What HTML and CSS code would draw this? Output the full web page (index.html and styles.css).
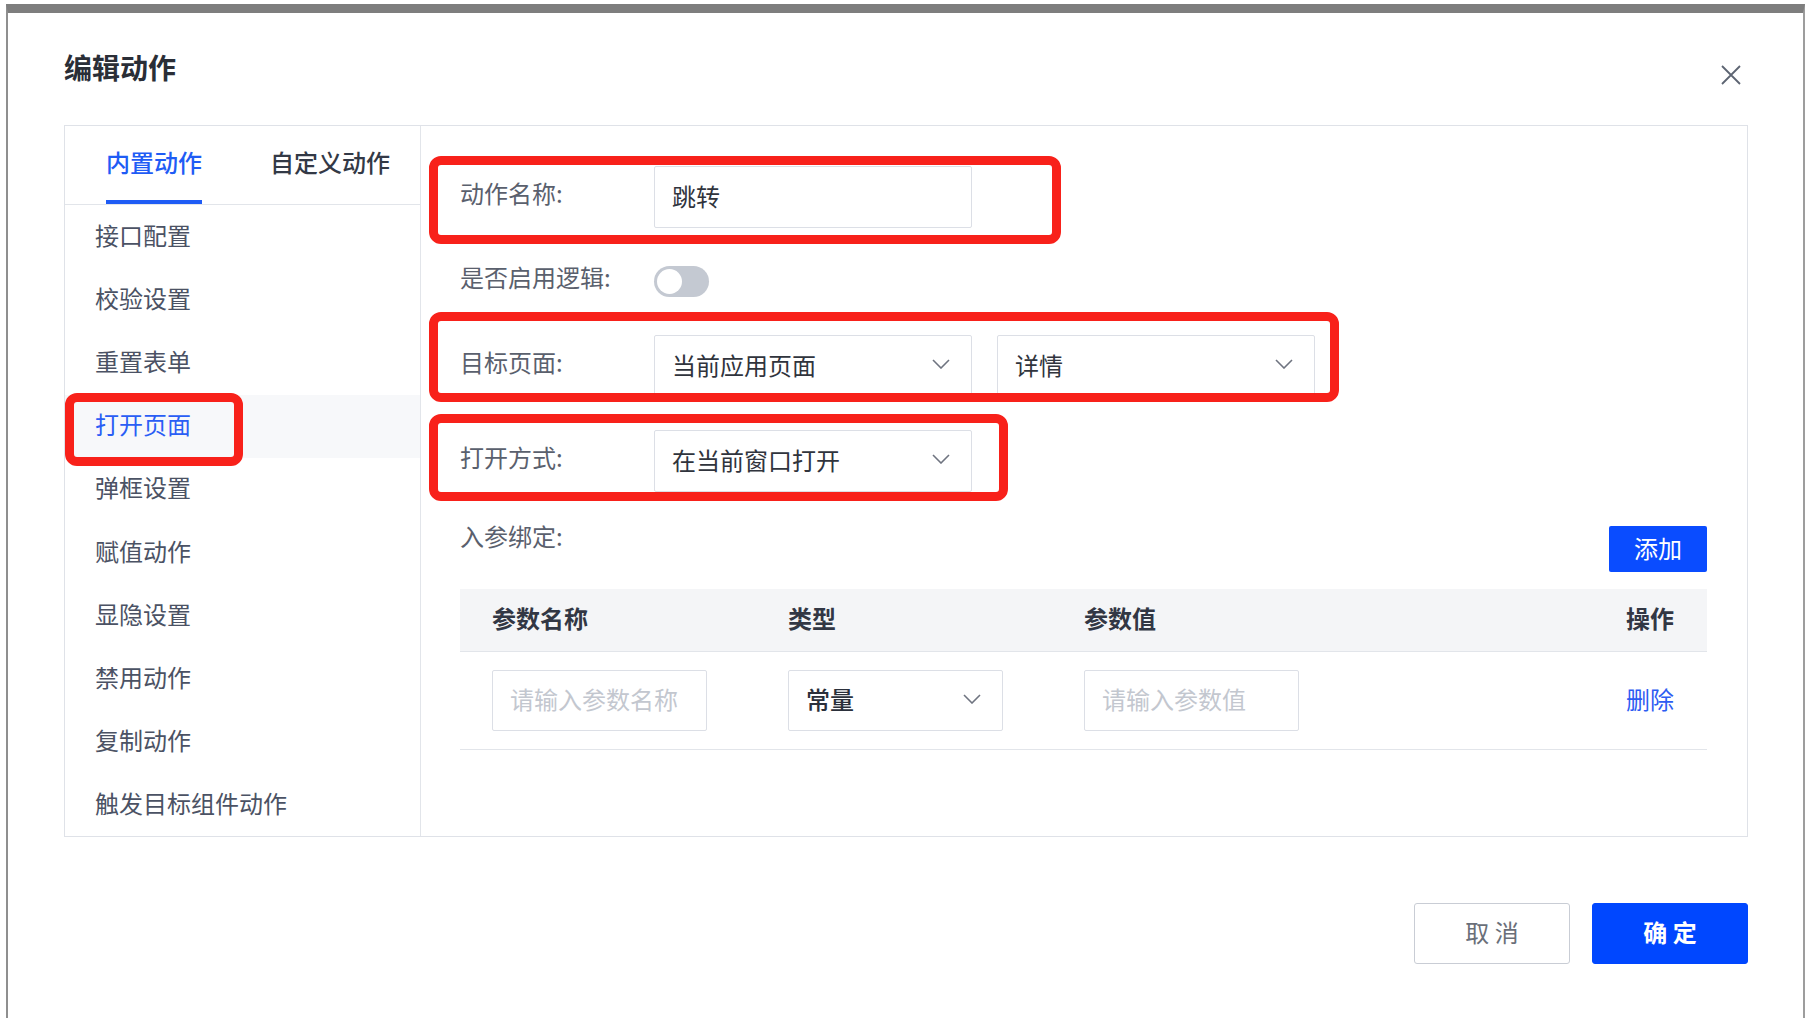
FILE: index.html
```html
<html>
    <head>
        <meta charset="utf-8">
        <link rel="stylesheet" href="styles.css">
    </head>
    <body>
        <div class="shot">
            <div class="dialogHead">
                <h2 class="dialogTitle">编辑动作</h2>
                <svg class="closeIcon" width="22" height="22" viewBox="0 0 22 22">
                    <path d="M2 2 L20 20 M20 2 L2 20" stroke="#5d6472" stroke-width="1.8" fill="none"/>
                </svg>
            </div>

            <div class="panel">
                <div class="side">
                    <div class="tabs">
                        <div class="tab active">内置动作</div>
                        <div class="tab">自定义动作</div>
                    </div>
                    <ul class="menu">
                        <li>接口配置</li>
                        <li>校验设置</li>
                        <li>重置表单</li>
                        <li class="active">打开页面</li>
                        <li>弹框设置</li>
                        <li>赋值动作</li>
                        <li>显隐设置</li>
                        <li>禁用动作</li>
                        <li>复制动作</li>
                        <li>触发目标组件动作</li>
                    </ul>
                </div>

                <div class="main">
                    <div class="formRow rowName">
                        <label class="formLabel">动作名称:</label>
                        <div class="field">跳转</div>
                    </div>
                    <div class="formRow rowLogic">
                        <label class="formLabel">是否启用逻辑:</label>
                        <span class="switch"><span class="knob"></span></span>
                    </div>
                    <div class="formRow rowTarget">
                        <label class="formLabel">目标页面:</label>
                        <div class="field select">
                            <span>当前应用页面</span>
                            <svg width="18" height="10" viewBox="0 0 18 10"><path d="M1 1 L9 9 L17 1" stroke="#6f7480" stroke-width="1.6" fill="none"/></svg>
                        </div>
                        <div class="field select second">
                            <span>详情</span>
                            <svg width="18" height="10" viewBox="0 0 18 10"><path d="M1 1 L9 9 L17 1" stroke="#6f7480" stroke-width="1.6" fill="none"/></svg>
                        </div>
                    </div>
                    <div class="formRow rowOpen">
                        <label class="formLabel">打开方式:</label>
                        <div class="field select">
                            <span>在当前窗口打开</span>
                            <svg width="18" height="10" viewBox="0 0 18 10"><path d="M1 1 L9 9 L17 1" stroke="#6f7480" stroke-width="1.6" fill="none"/></svg>
                        </div>
                    </div>

                    <div class="paramsHead">
                        <span class="formLabel">入参绑定:</span>
                        <button class="addButton">添加</button>
                    </div>

                    <div class="paramTable">
                        <div class="tHead">
                            <div class="c1">参数名称</div>
                            <div class="c2">类型</div>
                            <div class="c3">参数值</div>
                            <div class="c4">操作</div>
                        </div>
                        <div class="tRow">
                            <div class="c1"><div class="field small placeholder">请输入参数名称</div></div>
                            <div class="c2">
                                <div class="field small select strong">
                                    <span>常量</span>
                                    <svg width="18" height="10" viewBox="0 0 18 10"><path d="M1 1 L9 9 L17 1" stroke="#6f7480" stroke-width="1.6" fill="none"/></svg>
                                </div>
                            </div>
                            <div class="c3"><div class="field small placeholder">请输入参数值</div></div>
                            <div class="c4"><a class="link">删除</a></div>
                        </div>
                    </div>
                </div>
            </div>

            <div class="footer">
                <button class="btn">取 消</button>
                <button class="btn primary">确 定</button>
            </div>

            <!-- red annotation boxes -->
            <div class="mark markName"></div>
            <div class="mark markTarget"></div>
            <div class="mark markOpen"></div>
            <div class="mark markMenu"></div>
        </div>
    </body>
</html>
```

FILE: styles.css
```css
body {
    margin: 0;
    background: #fff;
    font-family: "Noto Sans CJK SC", "Noto Sans", sans-serif;
    overflow: hidden;
}
.shot {
    position: relative;
    margin: 4px 0 0 6px;
    width: 1799px;
    height: 1014px;
    box-sizing: border-box;
    border-top: 9px solid #7e7e7e;
    border-left: 2px solid #8f8f8f;
    border-right: 2px solid #9d9d9d;
    background: #fff;
}

/* header */
.dialogHead {
    height: 112px;
    padding: 0 61px 0 56px;
    display: flex;
    justify-content: space-between;
    align-items: center;
}
.dialogTitle {
    margin: 0 0 4px;
    font-size: 28px;
    font-weight: 700;
    color: #2a2e37;
}
.closeIcon {
    margin-top: 12px;
}

/* panel */
.panel {
    margin: 0 55px 0 56px;
    height: 712px;
    box-sizing: border-box;
    border: 1px solid #dfe2e8;
    display: flex;
}
.side {
    width: 356px;
    flex-shrink: 0;
    box-sizing: border-box;
    border-right: 1px solid #e2e5ea;
}
.tabs {
    height: 79px;
    box-sizing: border-box;
    border-bottom: 1px solid #e2e5ea;
    padding-left: 41px;
    display: flex;
    align-items: flex-end;
}
.tab {
    font-size: 24px;
    line-height: 32px;
    font-weight: 500;
    color: #333946;
    padding-bottom: 22px;
    border-bottom: 4px solid transparent;
}
.tab + .tab {
    margin-left: 68px;
}
.tab.active {
    color: #1f5cf5;
    border-bottom-color: #1f5cf5;
}
.menu {
    list-style: none;
    margin: 0;
    padding: 0;
}
.menu > li {
    height: 63.2px;
    box-sizing: border-box;
    padding: 0 0 5px 30px;
    display: flex;
    align-items: center;
    font-size: 24px;
    color: #4b5264;
}
.menu > li.active {
    background: #f7f8fa;
    color: #2a5ef5;
}

/* form */
.main {
    flex: 1;
    padding: 40px 40px 0 39px;
}
.formRow {
    display: flex;
    align-items: center;
    height: 62px;
}
.rowLogic {
    margin-top: 22px;
}
.rowTarget {
    margin-top: 23px;
}
.rowOpen {
    margin-top: 33px;
}
.formLabel {
    width: 194px;
    flex-shrink: 0;
    font-size: 24px;
    line-height: 32px;
    color: #5a606d;
}
.formRow > .formLabel {
    margin-bottom: 8px;
}
.field {
    width: 318px;
    height: 62px;
    box-sizing: border-box;
    border: 1px solid #dcdfe6;
    border-radius: 2px;
    padding: 0 17px 4px;
    display: flex;
    align-items: center;
    font-size: 24px;
    color: #30343d;
}
.field.select {
    justify-content: space-between;
    padding-right: 21px;
}
.field.second {
    margin-left: 25px;
}
.switch {
    width: 55px;
    height: 31px;
    border-radius: 16px;
    background: #c4c9d2;
    display: flex;
    align-items: center;
    padding-left: 3px;
    box-sizing: border-box;
}
.knob {
    width: 25px;
    height: 25px;
    border-radius: 50%;
    background: #fff;
}

/* params */
.paramsHead {
    margin-top: 30px;
    display: flex;
    justify-content: space-between;
    align-items: flex-start;
}
.paramsHead > .formLabel {
    margin-top: -2px;
}
.addButton {
    margin-top: 4px;
    width: 98px;
    height: 46px;
    padding: 0 0 4px;
    border: none;
    border-radius: 2px;
    background: #0a4cff;
    color: #fff;
    font-family: inherit;
    font-size: 24px;
}
.paramTable {
    margin-top: 17px;
}
.tHead, .tRow {
    display: flex;
    align-items: center;
    border-bottom: 1px solid #e2e5ea;
}
.tHead {
    height: 63px;
    box-sizing: border-box;
    padding-bottom: 5px;
    background: #f4f5f7;
    font-size: 24px;
    font-weight: 700;
    color: #323744;
}
.tRow {
    height: 98px;
    box-sizing: border-box;
}
.c1 {
    width: 328px;
    padding-left: 32px;
    box-sizing: border-box;
}
.c2 {
    width: 296px;
}
.c3 {
    flex: 1;
}
.c4 {
    padding-right: 33px;
    text-align: right;
}
.field.small {
    width: 215px;
    height: 61px;
}
.field.placeholder {
    color: #c3c7cf;
}
.field.strong {
    font-weight: 500;
    color: #2b303b;
}
.link {
    display: block;
    margin-bottom: 4px;
    font-size: 24px;
    color: #2d5cf2;
}

/* footer */
.footer {
    margin: 66px 55px 0 0;
    display: flex;
    justify-content: flex-end;
    gap: 22px;
}
.btn {
    width: 156px;
    height: 61px;
    box-sizing: border-box;
    padding: 0 0 4px;
    border: 1px solid #c9cdd5;
    border-radius: 3px;
    background: #fff;
    color: #6a6f79;
    font-family: inherit;
    font-size: 24px;
}
.btn.primary {
    border-color: #0047ff;
    background: #0047ff;
    color: #fff;
    font-weight: 700;
}

/* annotations */
.mark {
    position: absolute;
    box-sizing: border-box;
    border: 9px solid #f8211a;
    border-radius: 12px;
}
.markName {
    left: 421px;
    top: 143px;
    width: 632px;
    height: 88px;
}
.markTarget {
    left: 421px;
    top: 299px;
    width: 910px;
    height: 90px;
}
.markOpen {
    left: 421px;
    top: 401px;
    width: 579px;
    height: 87px;
}
.markMenu {
    left: 57px;
    top: 380px;
    width: 178px;
    height: 73px;
}
```
